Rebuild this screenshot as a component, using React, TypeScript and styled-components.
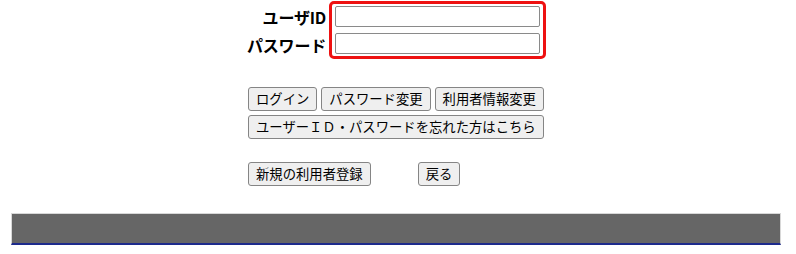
import React from "react";
import styled, { createGlobalStyle } from "styled-components";

const GlobalStyle = createGlobalStyle`
  body {
    margin: 0;
    background: #fff;
    font-family: "Noto Sans CJK JP", "Noto Sans", sans-serif;
    color: #000;
  }
`;

const Page = styled.div`
  width: 796px;
  height: 254px;
  overflow: hidden;
`;

const FormArea = styled.div`
  width: 298px;
  margin: 0 auto;
  padding-top: 1px;
  transform: translateX(-1px);
`;

const LoginRow = styled.div`
  display: flex;
  gap: 3px;
`;

const Labels = styled.div`
  width: 78px;
  display: flex;
  flex-direction: column;
  align-items: flex-end;
  padding-top: 2px;
`;

const Label = styled.label`
  height: 28px;
  line-height: 28px;
  font-size: 16px;
  font-weight: 700;
  white-space: nowrap;
  letter-spacing: -0.2px;
`;

const Highlight = styled.div`
  display: flex;
  flex-direction: column;
  gap: 6px;
  padding: 2px 3px;
  border: 3px solid #ee1111;
  border-radius: 5px;
`;

const TextInput = styled.input`
  box-sizing: border-box;
  width: 205px;
  height: 21px;
  margin: 0;
  border: 1px solid #8a8a8a;
  border-radius: 2px;
  background: #fff;
`;

const ButtonRow = styled.div<{ $top: number; $gap?: number }>`
  display: flex;
  gap: ${(p) => p.$gap ?? 4}px;
  margin-top: ${(p) => p.$top}px;
`;

const Button = styled.button`
  box-sizing: border-box;
  height: 24px;
  padding: 0 7px;
  border: 1px solid #858585;
  border-radius: 3px;
  background: #efefef;
  color: #000;
  font-family: "Noto Sans CJK JP", sans-serif;
  font-size: 13.33px;
  line-height: 22px;
  white-space: nowrap;
`;

const Footer = styled.div`
  box-sizing: border-box;
  width: 770px;
  height: 32px;
  margin: 27px 0 0 11px;
  background: #666666;
  border-top: 1px solid #d8d8d8;
  border-left: 1px solid #d8d8d8;
  border-right: 1px solid #d8d8d8;
  border-bottom: 2px solid #1d2a8c;
`;

const App = () => {
  return (
    <Page>
      <GlobalStyle />
      <FormArea>
        <LoginRow>
          <Labels>
            <Label htmlFor="uid">ユーザID</Label>
            <Label htmlFor="pwd">パスワード</Label>
          </Labels>
          <Highlight>
            <TextInput id="uid" type="text" />
            <TextInput id="pwd" type="password" />
          </Highlight>
        </LoginRow>
        <ButtonRow $top={28}>
          <Button>ログイン</Button>
          <Button>パスワード変更</Button>
          <Button>利用者情報変更</Button>
        </ButtonRow>
        <ButtonRow $top={4}>
          <Button>ユーザーＩＤ・パスワードを忘れた方はこちら</Button>
        </ButtonRow>
        <ButtonRow $top={23} $gap={47}>
          <Button>新規の利用者登録</Button>
          <Button>戻る</Button>
        </ButtonRow>
      </FormArea>
      <Footer />
    </Page>
  );
};

export default App;
